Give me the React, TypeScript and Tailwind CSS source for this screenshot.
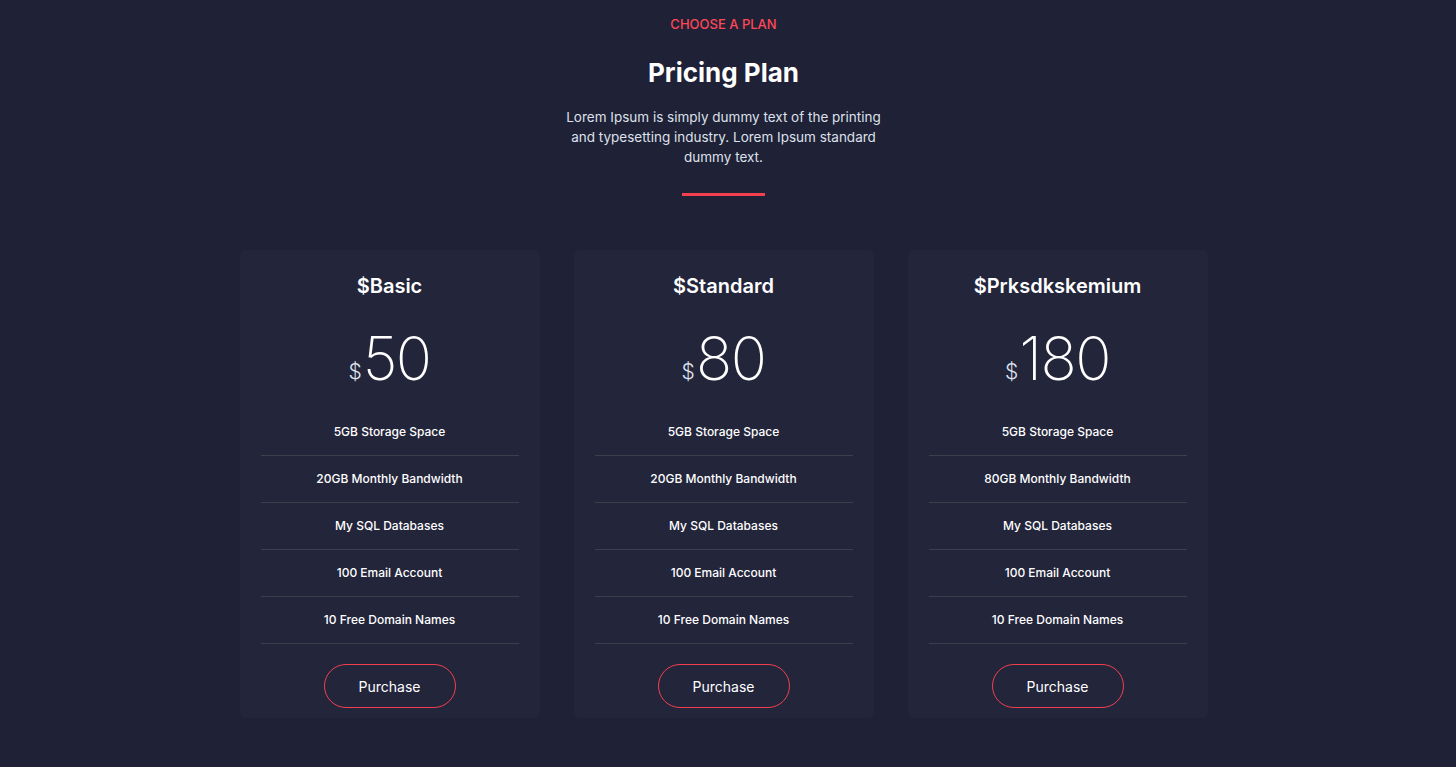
import React from "react";

const plans = [
  { name: "$Basic", price: "50", bandwidth: "20GB" },
  { name: "$Standard", price: "80", bandwidth: "20GB" },
  { name: "$Prksdkskemium", price: "180", bandwidth: "80GB" },
];

const PlanCard = ({ plan }: { plan: (typeof plans)[number] }) => {
  const features = [
    "5GB Storage Space",
    `${plan.bandwidth} Monthly Bandwidth`,
    "My SQL Databases",
    "100 Email Account",
    "10 Free Domain Names",
  ];

  return (
    <div className="w-[300px] bg-[#23253b] rounded-md px-[21px] pt-[23px] pb-[10px] flex flex-col items-center">
      <h3 className="text-[20px] leading-[26px] font-semibold text-white">{plan.name}</h3>

      <div className="mt-[20px] flex items-end text-white h-[70px]">
        <span className="text-[21px] font-light mb-[2px] mr-[1px] text-[#dfe3f0]">$</span>
        <span className="text-[60px] leading-[62px] font-extralight tracking-tight">{plan.price}</span>
      </div>

      <ul className="w-full mt-[20px]">
        {features.map((f) => (
          <li
            key={f}
            className="h-[47px] flex items-center justify-center text-[12px] font-medium text-white border-b border-[#3c3e4c]"
          >
            {f}
          </li>
        ))}
      </ul>

      <button className="mt-[20px] w-[132px] h-[44px] rounded-full border border-[#f2404f] text-white text-[14px]">
        Purchase
      </button>
    </div>
  );
};

export default function App() {
  return (
    <div
      className="min-h-screen bg-[#1f2136] pr-[9px] flex flex-col items-center"
      style={{ fontFamily: "Inter, 'Open Sans', sans-serif" }}
    >
      <p className="mt-[16px] text-[13px] leading-[16px] font-medium uppercase text-[#ff4757]">Choose a plan</p>
      <h2 className="mt-[24px] text-[26px] leading-[34px] font-bold text-white">Pricing Plan</h2>
      <p className="mt-[17px] w-[340px] text-center text-[13.5px] leading-[20px] text-[#dde0ea]">
        Lorem Ipsum is simply dummy text of the printing and typesetting industry. Lorem Ipsum standard dummy text.
      </p>
      <div className="mt-[26px] w-[83px] h-[3px] bg-[#f2404f]" />

      <div className="mt-[54px] flex gap-[34px]">
        {plans.map((p) => (
          <PlanCard key={p.name} plan={p} />
        ))}
      </div>
    </div>
  );
}
